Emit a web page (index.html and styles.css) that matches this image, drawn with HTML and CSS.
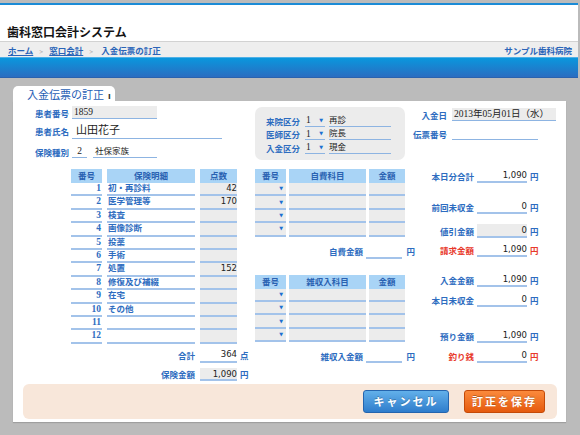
FILE: index.html
```html
<!DOCTYPE html>
<html lang="ja">
<head>
<meta charset="utf-8">
<title>入金伝票の訂正</title>
<link rel="stylesheet" href="styles.css">
</head>
<body>
<div class="app">
  <header class="hdr">
    <h1 class="sys-title">歯科窓口会計システム</h1>
  </header>
  <nav class="crumbs">
    <div class="crumb-path"><a class="lnk">ホーム</a><span class="sep">&gt;</span><a class="lnk">窓口会計</a><span class="sep">&gt;</span><span class="cur">入金伝票の訂正</span></div>
    <div class="clinic">サンプル歯科病院</div>
  </nav>
  <div class="bluebar"></div>

  <main class="stage">
    <div class="tab">入金伝票の訂正<span class="tab-i">ı</span></div>
    <section class="panel">
      <div class="top-sec">
        <div class="patient">
          <div class="prow r1"><span class="plabel">患者番号</span><span class="box gray w85 serif">1859</span></div>
          <div class="prow r2"><span class="plabel">患者氏名</span><span class="box name w150">山田花子</span></div>
          <div class="prow r3"><span class="plabel">保険種別</span><span class="box w15 serif center">2</span><span class="box w64 ml6">社保家族</span></div>
        </div>
        <div class="kubun">
          <div class="krow"><span class="klabel">来院区分</span><span class="ksel"><b>1</b><i class="tri">▼</i></span><span class="kval">再診</span></div>
          <div class="krow"><span class="klabel">医師区分</span><span class="ksel"><b>1</b><i class="tri">▼</i></span><span class="kval">院長</span></div>
          <div class="krow"><span class="klabel">入金区分</span><span class="ksel"><b>1</b><i class="tri">▼</i></span><span class="kval">現金</span></div>
        </div>
        <div class="dates">
          <div class="drow"><span class="dlabel">入金日</span><span class="dval gray">2013年05月01日（水）</span></div>
          <div class="drow d2"><span class="dlabel">伝票番号</span><span class="dval w86"></span></div>
        </div>
      </div>

      <div class="main-sec">
        <div class="col-left">
          <div class="ltable">
            <div class="th">番号</div><div class="th">保険明細</div><div class="th">点数</div>
            <div class="td num">1</div><div class="td nm">初・再診料</div><div class="td pt">42</div>
            <div class="td num">2</div><div class="td nm">医学管理等</div><div class="td pt">170</div>
            <div class="td num">3</div><div class="td nm">検査</div><div class="td pt"></div>
            <div class="td num">4</div><div class="td nm">画像診断</div><div class="td pt"></div>
            <div class="td num">5</div><div class="td nm">投薬</div><div class="td pt"></div>
            <div class="td num">6</div><div class="td nm">手術</div><div class="td pt"></div>
            <div class="td num">7</div><div class="td nm">処置</div><div class="td pt">152</div>
            <div class="td num">8</div><div class="td nm">修復及び補綴</div><div class="td pt"></div>
            <div class="td num">9</div><div class="td nm">在宅</div><div class="td pt"></div>
            <div class="td num">10</div><div class="td nm">その他</div><div class="td pt"></div>
            <div class="td num">11</div><div class="td nm"></div><div class="td pt"></div>
            <div class="td num">12</div><div class="td nm"></div><div class="td pt"></div>
          </div>
          <div class="trow t1"><span class="tlabel">合計</span><span class="tval">364</span><span class="unit">点</span></div>
          <div class="trow t2"><span class="tlabel">保険金額</span><span class="tval gray">1,090</span><span class="unit">円</span></div>
        </div>

        <div class="col-mid">
          <div class="mtable">
            <div class="th">番号</div><div class="th">自費科目</div><div class="th">金額</div>
            <div class="td sel"><i class="tri">▼</i></div><div class="td g"></div><div class="td g"></div>
            <div class="td sel"><i class="tri">▼</i></div><div class="td g"></div><div class="td g"></div>
            <div class="td sel"><i class="tri">▼</i></div><div class="td g"></div><div class="td g"></div>
            <div class="td sel"><i class="tri">▼</i></div><div class="td g"></div><div class="td g"></div>
          </div>
          <div class="mrow m1"><span class="mlabel">自費金額</span><span class="mval"></span><span class="unit">円</span></div>
          <div class="mtable second">
            <div class="th">番号</div><div class="th">雑収入科目</div><div class="th">金額</div>
            <div class="td sel"><i class="tri">▼</i></div><div class="td g"></div><div class="td g"></div>
            <div class="td sel"><i class="tri">▼</i></div><div class="td g"></div><div class="td g"></div>
            <div class="td sel"><i class="tri">▼</i></div><div class="td g"></div><div class="td g"></div>
            <div class="td sel"><i class="tri">▼</i></div><div class="td g"></div><div class="td g"></div>
          </div>
          <div class="mrow m2"><span class="mlabel">雑収入金額</span><span class="mval"></span><span class="unit">円</span></div>
        </div>

        <div class="col-right">
          <div class="srow s1"><span class="slabel">本日分合計</span><span class="sval">1,090</span><span class="unit">円</span></div>
          <div class="srow s2"><span class="slabel">前回未収金</span><span class="sval">0</span><span class="unit">円</span></div>
          <div class="srow s3"><span class="slabel">値引金額</span><span class="sval gray">0</span><span class="unit">円</span></div>
          <div class="srow s4 red"><span class="slabel">請求金額</span><span class="sval">1,090</span><span class="unit">円</span></div>
          <div class="srow s5"><span class="slabel">入金金額</span><span class="sval">1,090</span><span class="unit">円</span></div>
          <div class="srow s6"><span class="slabel">本日未収金</span><span class="sval">0</span><span class="unit">円</span></div>
          <div class="srow s7"><span class="slabel">預り金額</span><span class="sval">1,090</span><span class="unit">円</span></div>
          <div class="srow s8 red"><span class="slabel">釣り銭</span><span class="sval">0</span><span class="unit">円</span></div>
        </div>
      </div>

      <div class="actions">
        <button class="btn cancel" type="button">キャンセル</button>
        <button class="btn save" type="button">訂正を保存</button>
      </div>
    </section>
  </main>
</div>
</body>
</html>
```

FILE: styles.css
```css
* { box-sizing: border-box; margin: 0; padding: 0; }
html, body { width: 580px; height: 435px; overflow: hidden; }
body {
  background: #bbbbbb;
  font-family: "Liberation Serif", "Noto Sans CJK JP", serif;
  font-size: 8.5px;
  color: #222;
}
.app { padding-top: 3px; padding-right: 2px; }

.hdr {
  height: 38px;
  background: #fff;
  border-top: 2px solid #1b8bd6;
  padding: 20px 0 0 7px;
}
.sys-title { font: bold 12px/14px "Noto Sans CJK JP", sans-serif; color: #141414; }

.crumbs {
  height: 16px;
  background: #eeeeee;
  border-top: 1px solid #d2d2d2;
  display: flex;
  justify-content: space-between;
  align-items: center;
  padding: 0 6px 0 8px;
  font-weight: bold;
  color: #2a64b8;
}
.lnk { text-decoration: underline; color: #2a64b8; }
.sep { color: #a0a0a0; font-size: 7px; margin: 0 6px; }
.cur { color: #2a64b8; margin-left: 2px; }
.clinic { color: #2a64b8; }

.bluebar {
  height: 21px;
  background: linear-gradient(#0a97dd, #2a6dc1);
  border-top: 1px solid #4eb0e6;
  border-bottom: 1px solid #2a62ae;
}

.stage { padding: 8px 0 0 13px; }
.tab {
  width: 102px;
  height: 15px;
  background: #fff;
  border-radius: 5px 5px 0 0;
  padding-left: 14px;
  font: 11px/16px "Noto Sans CJK JP", sans-serif;
  color: #1f60b5;
}
.tab-i { font: bold 8px "DejaVu Sans", sans-serif; color: #333; margin-left: 4px; }

.panel {
  width: 553px;
  height: 321px;
  background: #fff;
  padding: 5px 9px 0 10px;
  box-shadow: 0 1px 1px rgba(0,0,0,0.15);
}

.gray { background: #ececec; }
.serif { font-family: "Liberation Serif", "Noto Sans CJK JP", serif; font-size: 9.5px; }
.center { text-align: center; }

.plabel, .klabel, .dlabel, .th, .td.nm, .tlabel, .mlabel, .slabel, .unit { font-weight: bold; }

/* top section */
.top-sec { display: flex; padding-left: 12px; height: 56px; }
.patient { width: 220px; }
.prow { display: flex; align-items: center; height: 13px; }
.prow.r2 { margin-top: 4px; height: 16px; }
.prow.r3 { margin-top: 6px; }
.plabel { width: 37px; color: #2d6cc0; }
.box {
  display: block;
  height: 13px;
  line-height: 12px;
  border-bottom: 1px solid #8db4e2;
  padding-left: 2px;
  color: #222;
}
.box.name { height: 16px; line-height: 15px; font-size: 11px; padding-left: 4px; }
.w85 { width: 85px; }
.w150 { width: 150px; }
.w15 { width: 15px; padding-left: 0; }
.w64 { width: 64px; }
.ml6 { margin-left: 6px; }

.kubun {
  width: 150px;
  height: 53px;
  margin-top: 1px;
  background: #ececec;
  border-radius: 7px;
  padding: 7px 0 0 11px;
}
.krow { display: flex; align-items: center; height: 13.5px; }
.klabel { width: 39px; color: #2d6cc0; }
.ksel {
  width: 20px;
  height: 12px;
  display: flex;
  justify-content: space-between;
  align-items: center;
  padding: 0 2px 0 1px;
  border-bottom: 1px solid #8db4e2;
}
.ksel b { font-weight: normal; font-size: 9.5px; color: #222; }
.tri { font: normal 5px/1 "DejaVu Sans", sans-serif; color: #1e6fd0; }
.kval {
  width: 62px;
  height: 12px;
  margin-left: 4px;
  line-height: 11px;
  border-bottom: 1px solid #8db4e2;
  color: #222;
}

.dates { margin-left: 8px; margin-top: 2px; }
.drow { display: flex; align-items: center; height: 13px; }
.drow.d2 { margin-top: 6px; }
.dlabel { width: 34px; text-align: right; margin-right: 5px; color: #2d6cc0; white-space: nowrap; }
.dval {
  width: 104px;
  height: 13px;
  line-height: 12px;
  padding-left: 2px;
  border-bottom: 1px solid #8db4e2;
  font-size: 9.5px;
  color: #222;
}
.dval.w86 { width: 86px; }

/* main section */
.main-sec { display: flex; padding-left: 12px; margin-top: 7px; height: 212px; }

.col-left { width: 220px; }
.ltable {
  margin-left: 36px;
  display: grid;
  grid-template-columns: 31px 88px 37px;
  column-gap: 5px;
}
.th {
  height: 14px;
  line-height: 14px;
  background: #a9d4f6;
  color: #2a62b2;
  text-align: center;
}
.td {
  height: 13.4px;
  line-height: 11.4px;
  border-bottom: 2px solid #a3c3ea;
  color: #2d6cc0;
  white-space: nowrap;
}
.td.num { text-align: right; padding-right: 1px; font-weight: bold; font-size: 9.5px; }
.td.nm { padding-left: 1px; }
.td.pt {
  background: #ececec;
  text-align: right;
  font-family: "DejaVu Sans", sans-serif;
  font-size: 8.5px;
  color: #222;
}

.trow { display: flex; align-items: center; margin-left: 36px; }
.trow.t1 { margin-top: 4px; height: 15px; }
.trow.t2 { margin-top: 5px; height: 13px; }
.tlabel { width: 124px; text-align: right; margin-right: 5px; color: #2d6cc0; }
.tval {
  width: 37px;
  height: 100%;
  line-height: 12px;
  text-align: right;
  border-bottom: 2px solid #a3c3ea;
  font-family: "DejaVu Sans", sans-serif;
  color: #222;
}
.trow.t1 .tval { line-height: 13px; }
.unit { color: #2d6cc0; margin-left: 3px; }

.col-mid { width: 160px; }
.mtable {
  display: grid;
  grid-template-columns: 31px 77px 36px;
  column-gap: 3px;
}
.mtable.second { margin-top: 16px; }
.td.g { background: #ececec; }
.td.sel {
  background: #ececec;
  display: flex;
  justify-content: flex-end;
  align-items: center;
  padding-right: 3px;
}
.mrow { display: flex; align-items: center; height: 15px; }
.mrow.m1 { margin-top: 7px; }
.mrow.m2 { margin-top: 6px; }
.mlabel { width: 110px; text-align: right; margin-right: 3px; color: #2d6cc0; }
.mval { width: 37px; height: 100%; border-bottom: 2px solid #a3c3ea; }
.mrow .unit { margin-left: 4px; }

.col-right { width: 140px; }
.srow { display: flex; align-items: center; height: 14px; }
.slabel { width: 59px; text-align: right; margin-right: 3px; color: #2d6cc0; }
.sval {
  width: 50px;
  height: 100%;
  line-height: 12px;
  text-align: right;
  border-bottom: 2px solid #a3c3ea;
  font-family: "DejaVu Sans", sans-serif;
  color: #222;
}
.srow.red .slabel, .srow.red .unit { color: #e8392b; }
.s1 { margin-top: 0; }
.s2 { margin-top: 17px; }
.s3 { margin-top: 10px; }
.s4 { margin-top: 5px; }
.s5 { margin-top: 16px; }
.s6 { margin-top: 6px; }
.s7 { margin-top: 22px; }
.s8 { margin-top: 6px; }

/* actions */
.actions {
  margin-top: 3px;
  height: 35px;
  background: #f8e7da;
  border-radius: 6px;
  display: flex;
  justify-content: flex-end;
  align-items: center;
  gap: 15px;
  padding-right: 12px;
}
.btn {
  height: 23px;
  border-radius: 3px;
  font: bold 11px/21px "Noto Sans CJK JP", sans-serif;
  color: #fff;
  letter-spacing: 2px;
  text-shadow: 0 -1px 0 rgba(0,0,0,0.25);
}
.cancel {
  width: 86px;
  background: linear-gradient(#62b0ea, #2f7dcc);
  border: 1px solid #2565ae;
}
.save {
  width: 81px;
  background: linear-gradient(#fb8a3c, #e55a0e);
  border: 1px solid #c44a08;
}
```
